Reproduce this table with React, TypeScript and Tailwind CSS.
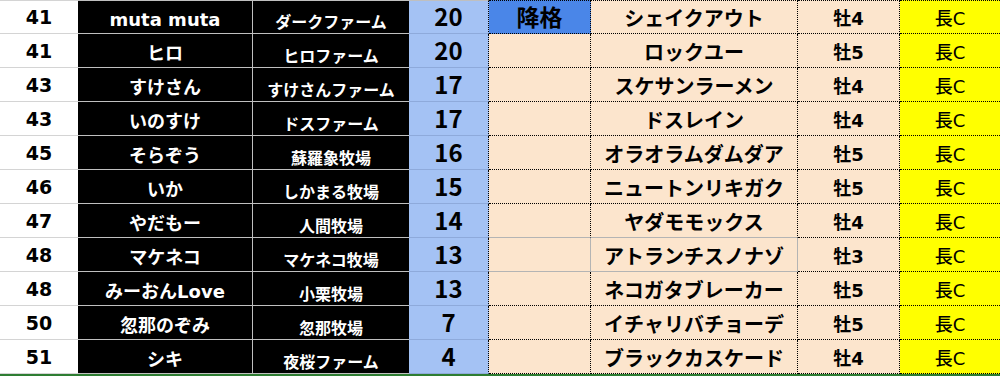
const rows: string[][] = [
  ['41', 'muta muta', 'ダークファーム', '20', '降格', 'シェイクアウト', '牡4', '長C'],
  ['41', 'ヒロ', 'ヒロファーム', '20', '', 'ロックユー', '牡5', '長C'],
  ['43', 'すけさん', 'すけさんファーム', '17', '', 'スケサンラーメン', '牡4', '長C'],
  ['43', 'いのすけ', 'ドスファーム', '17', '', 'ドスレイン', '牡4', '長C'],
  ['45', 'そらぞう', '蘇羅象牧場', '16', '', 'オラオラムダムダア', '牡5', '長C'],
  ['46', 'いか', 'しかまる牧場', '15', '', 'ニュートンリキガク', '牡5', '長C'],
  ['47', 'やだもー', '人間牧場', '14', '', 'ヤダモモックス', '牡4', '長C'],
  ['48', 'マケネコ', 'マケネコ牧場', '13', '', 'アトランチスノナゾ', '牡3', '長C'],
  ['48', 'みーおんLove', '小栗牧場', '13', '', 'ネコガタブレーカー', '牡5', '長C'],
  ['50', '忽那のぞみ', '忽那牧場', '7', '', 'イチャリバチョーデ', '牡5', '長C'],
  ['51', 'シキ', '夜桜ファーム', '4', '', 'ブラックカスケード', '牡4', '長C'],
];

const cell = 'h-[34px] flex items-end justify-center leading-none whitespace-nowrap';
const latin = "font-['DejaVu_Sans','Noto_Sans_CJK_JP',sans-serif]";

export default function App() {
  return (
    <div className="w-[1000px] h-[376px] bg-white overflow-hidden font-['Noto_Sans_CJK_JP',sans-serif]">
      <div className="grid grid-cols-[78px_175px_156px_80px_102px_207px_102px_100px]">
        {rows.map((r, i) => {
          const first = i === 0;
          // 降格/馬名 of row 8 have no dotted border, only gridlines
          const grayBottom = i === 6 || i === 7;
          const grayRight = i === 7;
          return (
            <div key={i} className="contents">
              {/* 順位 */}
              <div
                className={`${cell} pb-[6px] bg-white border-b border-[#d4d4d4] text-[19px] font-bold text-black ${latin} ${first ? 'border-t' : ''}`}
              >
                {r[0]}
              </div>
              {/* 名前 */}
              <div
                className={`${cell} pb-[4px] bg-black text-white border-r border-b border-[#bfbfbf] text-[18px] font-bold ${latin} ${first ? 'border-t' : ''}`}
              >
                {r[1]}
              </div>
              {/* 牧場 */}
              <div
                className={`${cell} pb-[4px] bg-black text-white border-b border-[#bfbfbf] text-[16px] font-bold ${first ? 'border-t' : ''}`}
              >
                {r[2]}
              </div>
              {/* ポイント */}
              <div
                className={`${cell} pb-[5px] bg-[#a4c2f4] text-black text-[24px] font-bold border-b border-b-[#8eaadb] border-r border-r-black [border-right-style:dotted] ${first ? 'border-t border-t-[#bfbfbf]' : ''}`}
              >
                {r[3]}
              </div>
              {/* 降格 */}
              <div
                className={`${cell} pb-[5px] text-black text-[23px] font-bold border-r border-b ${
                  first ? 'bg-[#4a86e8] border-t' : 'bg-[#fce5cd]'
                } ${grayBottom ? 'border-b-[#b4b4b4]' : 'border-b-black [border-bottom-style:dotted]'} ${
                  grayRight ? 'border-r-[#b4b4b4]' : 'border-r-black [border-right-style:dotted]'
                } ${first ? 'border-t-black [border-top-style:dotted]' : ''}`}
              >
                {r[4]}
              </div>
              {/* 馬名 */}
              <div
                className={`${cell} pb-[5px] bg-[#fce5cd] text-black text-[20px] font-bold border-r border-b ${
                  grayBottom ? 'border-b-[#b4b4b4]' : 'border-b-black [border-bottom-style:dotted]'
                } ${grayRight ? 'border-r-[#b4b4b4]' : 'border-r-black [border-right-style:dotted]'} ${
                  first ? 'border-t border-t-black [border-top-style:dotted]' : ''
                }`}
              >
                {r[5]}
              </div>
              {/* 性齢 */}
              <div
                className={`${cell} pb-[5px] bg-[#fce5cd] text-black text-[18px] font-bold border-r border-b border-black border-dotted ${latin} ${first ? 'border-t' : ''}`}
              >
                {r[6]}
              </div>
              {/* 距離 */}
              <div
                className={`${cell} pb-[5px] bg-[#ffff00] text-black text-[18px] font-medium ${latin} border-b border-black border-dotted ${first ? 'border-t' : ''}`}
              >
                {r[7]}
              </div>
            </div>
          );
        })}
      </div>
      <div className="h-[2px] bg-[#2e7d32]" />
    </div>
  );
}
